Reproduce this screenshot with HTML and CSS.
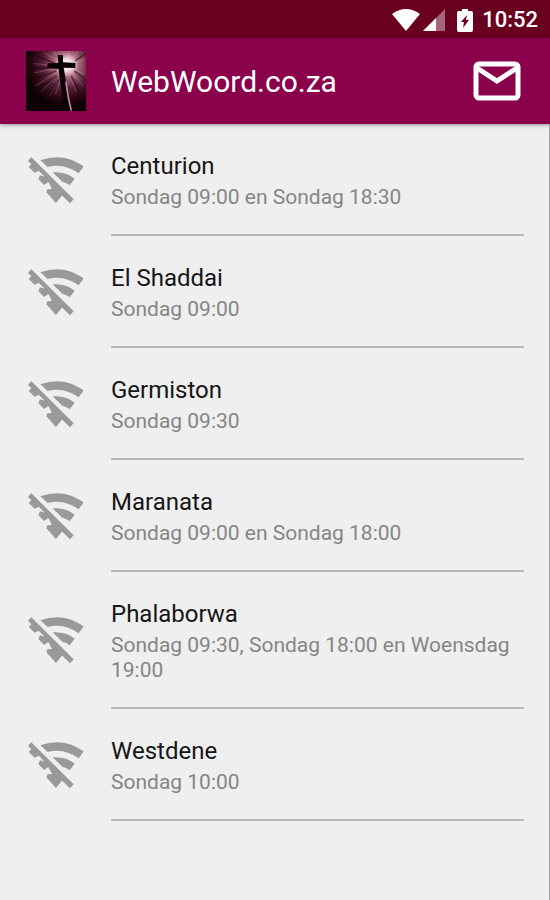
FILE: index.html
```
<!DOCTYPE html>
<html lang="af">
<head>
  <meta charset="utf-8">
  <meta name="viewport" content="width=device-width, initial-scale=1">
  <title>WebWoord.co.za</title>
  <link rel="stylesheet" href="styles.css">
</head>
<body>
  <!-- shared icon for the stations that are off air -->
  <svg class="defs" width="0" height="0" aria-hidden="true">
    <symbol id="wifi-off" viewBox="38 33 168 141">
      <path d="M75 43Q144 18 205 61L190 82Q146 50 97 63Z"/>
      <path d="M112 79Q151 76 178 98L163 118Q154 109 141 107Z"/>
      <path d="M48 34L175 160L164 172L135 143L142 146L122 171L93 139L96 130L110 129L99 108L86 117L69 99L74 88L88 92L70 74L58 80L40 63L48 55L38 44Z"/>
    </symbol>
  </svg>

  <div class="status-bar">
    <svg class="status-wifi" viewBox="0 0 28 22" width="28" height="22"><path d="M0 5Q14 -5 28 5L14 22Z"/></svg>
    <svg class="status-signal" viewBox="0 0 22 22" width="22" height="22"><path d="M0 22L22 0V22Z" opacity=".4"/><path d="M0 22L13 9V22Z"/></svg>
    <svg class="status-battery" viewBox="0 0 16 23" width="16" height="23"><path fill-rule="evenodd" d="M5 0H11V2H14Q16 2 16 4V21Q16 23 14 23H2Q0 23 0 21V4Q0 2 2 2H5ZM10 6L4 13H7L6 19L12 11H9Z"/></svg>
    <span class="time">10:52</span>
  </div>

  <header class="top-bar">
    <svg class="logo" viewBox="0 0 180 180">
      <defs>
        <radialGradient id="glow" gradientUnits="userSpaceOnUse" cx="122" cy="42" r="125">
          <stop offset="0" stop-color="#fff"/>
          <stop offset=".14" stop-color="#f3dbe3"/>
          <stop offset=".3" stop-color="#a8657c"/>
          <stop offset=".55" stop-color="#57203a"/>
          <stop offset=".8" stop-color="#2c0613"/>
          <stop offset="1" stop-color="#0c0206"/>
        </radialGradient>
      </defs>
      <path fill="url(#glow)" d="M0 0H180V180H0Z"/>
      <path stroke="#f3c9d6" stroke-width="2" opacity=".4" d="M120 45L55 5M120 45L82 2M120 45L22 38M120 45L25 66M120 45L30 104M120 45L46 122M120 45L70 135M120 45L88 130M120 45L150 120M120 45L172 105M120 45L176 70M120 45L176 25M120 45L155 3M120 45L130 0"/>
      <path stroke="#16040b" stroke-width="5" opacity=".5" d="M90 38L20 10M90 50L5 52M90 60L5 92M92 75L30 120M98 85L58 150M145 60L178 85M135 75L165 130M148 30L178 8"/>
      <path fill="#080105" d="M95 12H111V34L148 36V51L113 50L122 104L136 180H116L101 82L98 54L64 50V37L97 36Z"/>
      <path fill="none" stroke="#b98a98" stroke-width="5" d="M120 92Q124 132 136 179"/>
    </svg>
    <h1>WebWoord.co.za</h1>
    <button class="mail" type="button" aria-label="E-pos">
      <svg viewBox="0 0 48 40" width="48" height="40"><rect x="3" y="3" width="42" height="34" rx="3"/><path d="M4 7L24 20L44 7"/></svg>
    </button>
  </header>

  <main>
    <ul class="stations">
      <li>
        <svg class="wifi-off"><use href="#wifi-off"/></svg>
        <div class="info">
          <h2>Centurion</h2>
          <p>Sondag 09:00 en Sondag 18:30</p>
        </div>
      </li>
      <li>
        <svg class="wifi-off"><use href="#wifi-off"/></svg>
        <div class="info">
          <h2>El Shaddai</h2>
          <p>Sondag 09:00</p>
        </div>
      </li>
      <li>
        <svg class="wifi-off"><use href="#wifi-off"/></svg>
        <div class="info">
          <h2>Germiston</h2>
          <p>Sondag 09:30</p>
        </div>
      </li>
      <li>
        <svg class="wifi-off"><use href="#wifi-off"/></svg>
        <div class="info">
          <h2>Maranata</h2>
          <p>Sondag 09:00 en Sondag 18:00</p>
        </div>
      </li>
      <li>
        <svg class="wifi-off"><use href="#wifi-off"/></svg>
        <div class="info">
          <h2>Phalaborwa</h2>
          <p>Sondag 09:30, Sondag 18:00 en Woensdag 19:00</p>
        </div>
      </li>
      <li>
        <svg class="wifi-off"><use href="#wifi-off"/></svg>
        <div class="info">
          <h2>Westdene</h2>
          <p>Sondag 10:00</p>
        </div>
      </li>
    </ul>
  </main>
</body>
</html>
```
FILE: styles.css
```
* {
  box-sizing: border-box;
}

body {
  display: flex;
  flex-direction: column;
  min-height: 100vh;
  margin: 0;
  background-color: #efefef;
  font-family: Roboto, "Liberation Sans", sans-serif;
}

h1,
h2,
p,
ul {
  margin: 0;
  padding: 0;
  font-weight: 400;
}

.defs {
  position: absolute;
}

.status-bar {
  display: flex;
  align-items: center;
  justify-content: flex-end;
  height: 38px;
  padding: 2px 12px 0 0;
  background-color: #6a0020;
  color: white;
  fill: white;
}

.status-signal {
  margin-left: 3px;
}

.status-battery {
  margin: 0 9px 0 12px;
}

.time {
  font-size: 22px;
  font-weight: 500;
  line-height: 26px;
}

.top-bar {
  display: flex;
  align-items: center;
  height: 86px;
  padding: 0 29px 0 26px;
  background-color: #8b004b;
  color: white;
  box-shadow: 0 1px 4px rgba(0, 0, 0, 0.4);
  z-index: 1;
}

.logo {
  width: 60px;
  height: 60px;
  margin-right: 25px;
}

.top-bar h1 {
  flex: 1;
  padding-top: 2px;
  font-size: 30px;
  line-height: 36px;
}

.mail {
  display: flex;
  padding: 0;
  border: 0;
  background: none;
}

.mail svg {
  fill: none;
  stroke: white;
  stroke-width: 5;
}

main {
  flex: 1;
  border-right: 1px solid #a8a8a8;
}

.stations {
  padding: 0 25px 0 28px;
  list-style: none;
}

.stations li {
  display: flex;
  align-items: center;
  gap: 27px;
}

.wifi-off {
  flex: none;
  width: 56px;
  height: 47px;
  fill: #999;
}

.info {
  flex: 1;
  padding: 28px 0 24px;
  border-bottom: 2px solid #b8b8b8;
}

.info h2 {
  margin-bottom: 5px;
  color: #161616;
  font-size: 24px;
  line-height: 28px;
}

.info p {
  color: #858585;
  font-size: 21px;
  line-height: 25px;
}
```
